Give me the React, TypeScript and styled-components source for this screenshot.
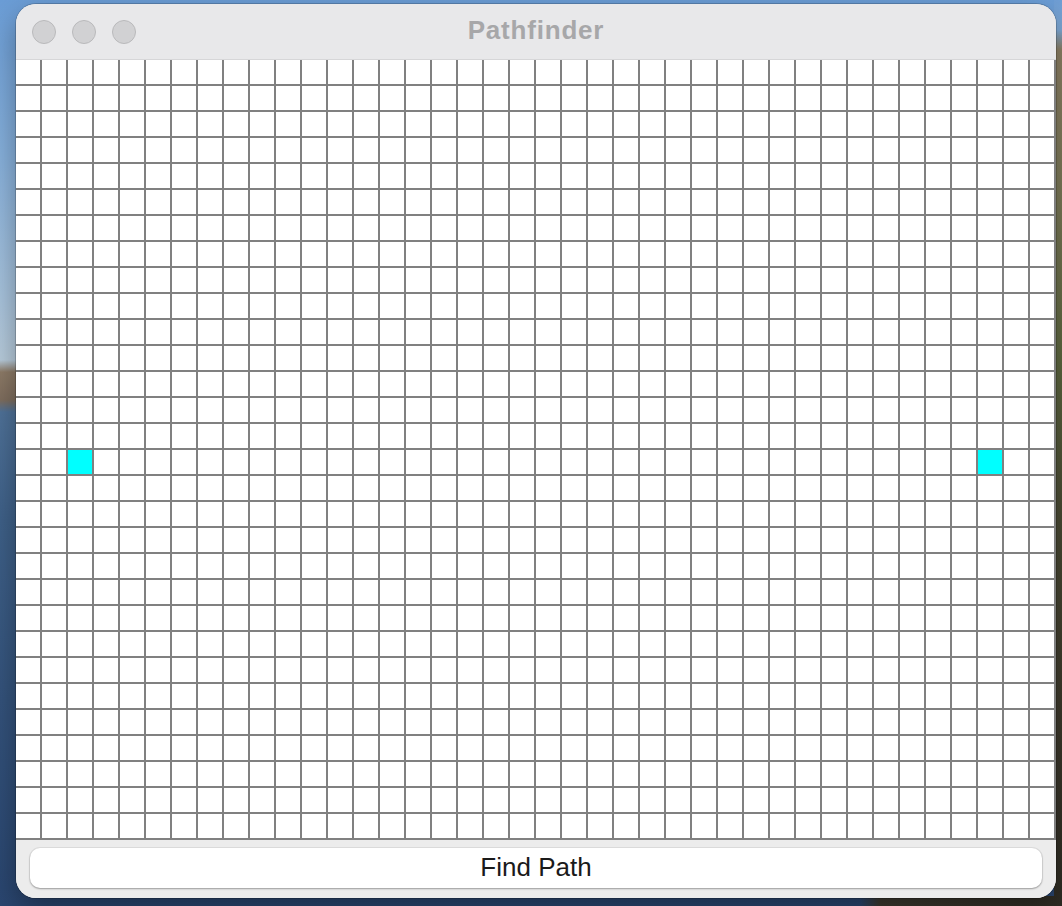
import React from "react";
import styled, { createGlobalStyle } from "styled-components";

const COLS = 40;
const ROWS = 30;
const CYAN_CELLS = new Set(["15-2", "15-37"]);

const GlobalStyle = createGlobalStyle`
  html, body {
    margin: 0;
    padding: 0;
    width: 1062px;
    height: 906px;
    overflow: hidden;
  }
  body {
    font-family: "Liberation Sans", Arial, sans-serif;
  }
`;

const Desktop = styled.div`
  width: 1062px;
  height: 906px;
  box-sizing: border-box;
  padding: 4px 6px 8px 16px;
  background:
    linear-gradient(
        180deg,
        #6f9fd6 0px,
        #7ea9d6 30px,
        #8f8266 50px,
        #7c7a58 200px,
        #5e6840 360px,
        #4a4a34 520px,
        #3e3a2c 700px,
        #2f2c24 906px
      )
      right top / 8px 906px no-repeat,
    linear-gradient(90deg, rgba(0, 0, 0, 0) 0px, rgba(0, 0, 0, 0) 860px, #3d3a30 880px, #2f2c24 1062px)
      left bottom / 1062px 10px no-repeat,
    linear-gradient(
      180deg,
      #6b9dd6 0px,
      #86b0dc 150px,
      #a9c4dd 300px,
      #b8ccdc 360px,
      #8e7c68 372px,
      #7f6e5e 400px,
      #4f7299 412px,
      #3f6189 520px,
      #34537c 700px,
      #2a4670 906px
    );
`;

const Window = styled.div`
  width: 1040px;
  height: 894px;
  border-radius: 20px;
  overflow: hidden;
  display: flex;
  flex-direction: column;
  background: #ececec;
  box-shadow: 0 0 0 1px rgba(0, 0, 0, 0.18), 0 12px 30px rgba(0, 0, 0, 0.35);
`;

const TitleBar = styled.div`
  position: relative;
  height: 56px;
  flex: none;
  box-sizing: border-box;
  background: #e8e8ea;
  border-bottom: 1px solid #d6d6d8;
  display: flex;
  align-items: center;
  padding-left: 16px;
`;

const Lights = styled.div`
  display: flex;
  gap: 16px;
  margin-top: 1px;
`;

const Light = styled.span`
  width: 24px;
  height: 24px;
  box-sizing: border-box;
  border-radius: 50%;
  background: #d1d1d3;
  border: 1px solid #b9b9bb;
`;

const Title = styled.div`
  position: absolute;
  left: 0;
  right: 0;
  top: 0;
  bottom: 0;
  display: flex;
  align-items: center;
  justify-content: center;
  font-family: "Liberation Sans", Arial, sans-serif;
  font-weight: 700;
  font-size: 26px;
  letter-spacing: 0.8px;
  color: #a7a7a9;
  pointer-events: none;
  padding-bottom: 2px;
`;

const Grid = styled.div`
  display: grid;
  grid-template-columns: repeat(${COLS}, 26px);
  grid-template-rows: repeat(${ROWS}, 26px);
  flex: none;
  background: #ffffff;
`;

const Cell = styled.div<{ $active: boolean }>`
  box-sizing: border-box;
  border-right: 2px solid #808080;
  border-bottom: 2px solid #808080;
  background: ${(p) => (p.$active ? "#00ffff" : "#ffffff")};
`;

const Footer = styled.div`
  flex: 1;
  display: flex;
  padding: 8px 14px 10px 14px;
  background: #ececec;
`;

const Button = styled.button`
  flex: 1;
  height: 40px;
  border: none;
  border-radius: 10px;
  background: #ffffff;
  box-shadow: 0 0 0 1px rgba(0, 0, 0, 0.06), 0 1px 2px rgba(0, 0, 0, 0.3);
  font-family: "Liberation Sans", Arial, sans-serif;
  font-size: 26px;
  color: #1a1a1a;
  padding: 0 0 1px 0;
  cursor: pointer;
`;

export default function App() {
  const cells = [];
  for (let r = 0; r < ROWS; r++) {
    for (let c = 0; c < COLS; c++) {
      cells.push(<Cell key={`${r}-${c}`} $active={CYAN_CELLS.has(`${r}-${c}`)} />);
    }
  }
  return (
    <>
      <GlobalStyle />
      <Desktop>
        <Window>
          <TitleBar>
            <Lights>
              <Light />
              <Light />
              <Light />
            </Lights>
            <Title>Pathfinder</Title>
          </TitleBar>
          <Grid>{cells}</Grid>
          <Footer>
            <Button>Find Path</Button>
          </Footer>
        </Window>
      </Desktop>
    </>
  );
}
